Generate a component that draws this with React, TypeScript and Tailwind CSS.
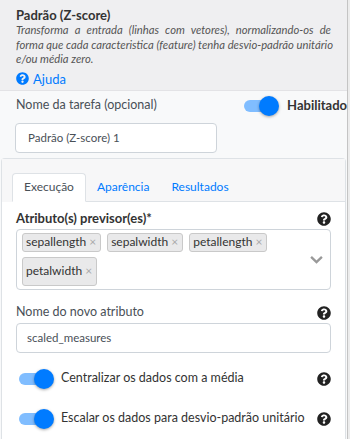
import { FaQuestionCircle } from "react-icons/fa";

const chips = ["sepallength", "sepalwidth", "petallength"];

const Toggle = () => (
  <span className="relative flex h-[20px] w-[36px] shrink-0 items-center">
    <span className="ml-[1px] h-[12px] w-[30px] rounded-full bg-[#80bdff]" />
    <span className="absolute right-0 top-0 h-[20px] w-[20px] rounded-full bg-[#007bff] shadow-[0_1px_3px_rgba(0,0,0,0.35)]" />
  </span>
);

const Help = () => <FaQuestionCircle className="h-[14px] w-[14px] shrink-0 text-[#222]" />;

const Chip = ({ label, tall }: { label: string; tall?: boolean }) => (
  <span
    className={`flex items-center gap-[3px] rounded-[3px] border border-[#c9c9c9] bg-[#e9e9ea] pl-[3px] pr-[4px] text-[12px] text-[#333] ${
      tall ? "h-[29px]" : "h-[19px]"
    }`}
  >
    {label}
    <span className="text-[12px] text-[#aaa]">×</span>
  </span>
);

export default function App() {
  return (
    <div
      className="flex h-[439px] w-[350px] overflow-hidden bg-[#ececec] text-[#333]"
      style={{ fontFamily: "Lato, 'Liberation Sans', sans-serif" }}
    >
      <div className="flex w-[348px] shrink-0 flex-col border-r border-[#c4c4c4] bg-[#f8f9fa]">
        <div className="border-b border-[#e3e3e6] bg-[#efeff1] px-[16px] pb-[3px] pt-[7px]">
          <div className="text-[13px] font-bold leading-[16px] text-[#333]">Padrão (Z-score)</div>
          <div className="text-[11.25px] italic leading-[14.5px] text-[#555]">
            <p className="whitespace-nowrap text-justify [text-align-last:justify]">
              Transforma a entrada (linhas com vetores), normalizando-os de
            </p>
            <p className="whitespace-nowrap text-justify [text-align-last:justify]">
              forma que cada caracteristica (feature) tenha desvio-padrão unitário
            </p>
            <p>e/ou média zero.</p>
          </div>
          <div className="mt-[4px] flex items-center gap-[4px] text-[13px] leading-[16px] text-[#007bff]">
            <FaQuestionCircle className="h-[13px] w-[13px]" />
            Ajuda
          </div>
        </div>

        <div className="mt-[5px] flex h-[20px] items-center pl-[16px]">
          <span className="flex-1 text-[12.5px] text-[#495057]">Nome da tarefa (opcional)</span>
          <div className="flex items-center gap-[8px] whitespace-nowrap">
            <Toggle />
            <span className="text-[13px] font-bold text-[#333]">Habilitado</span>
          </div>
        </div>
        <div className="ml-[15px] mt-[7px] flex h-[30px] w-[202px] items-center rounded-[4px] border border-[#ced4da] bg-white px-[12px] text-[11.5px] text-[#495057]">
          Padrão (Z-score) 1
        </div>

        <div className="ml-[1px] mr-[1px] mt-[5px] flex flex-1 flex-col rounded-t-[4px] border border-b-0 border-[#dee2e6] bg-white">
          <div className="bg-[#f7f7f8] pl-[10px] pt-[14px]">
            <div className="flex border-b border-[#dee2e6] text-[12px]">
              <span className="-mb-px flex h-[29px] items-center rounded-t-[4px] border border-[#dee2e6] border-b-white bg-white px-[11px] text-[#495057]">
                Execução
              </span>
              <span className="flex h-[28px] items-center px-[11px] text-[#007bff]">Aparência</span>
              <span className="flex h-[28px] items-center px-[11px] text-[#007bff]">Resultados</span>
            </div>
          </div>

          <div className="flex flex-col px-[14px] pt-[8px]">
            <div className="flex h-[18px] items-center justify-between">
              <span className="text-[13px] font-bold text-[#333]">Atributo(s) previsor(es)*</span>
              <Help />
            </div>
            <div className="mt-[1px] flex h-[61px] items-start rounded-[4px] border border-[#ced4da] bg-white pl-[5px] pr-[6px] pt-[3px]">
              <div className="flex flex-1 flex-wrap gap-x-[6px] gap-y-[5px]">
                {chips.map((c) => (
                  <Chip key={c} label={c} />
                ))}
                <Chip label="petalwidth" tall />
              </div>
              <svg viewBox="0 0 16 10" className="mt-[22px] h-[9px] w-[15px] text-[#999]">
                <path d="M2 2l6 6 6-6" fill="none" stroke="currentColor" strokeWidth="2.6" />
              </svg>
            </div>

            <div className="mt-[14px] flex h-[18px] items-center justify-between">
              <span className="text-[12.5px] text-[#495057]">Nome do novo atributo</span>
              <Help />
            </div>
            <div className="mt-[1px] flex h-[30px] items-center rounded-[4px] border border-[#ced4da] bg-white px-[10px] text-[11.5px] text-[#495057]">
              scaled_measures
            </div>

            <div className="mt-[14px] flex h-[24px] items-center pl-[2px]">
              <Toggle />
              <span className="ml-[7px] flex-1 text-[12.5px] text-[#333]">Centralizar os dados com a média</span>
              <Help />
            </div>
            <div className="mt-[16px] flex h-[24px] items-center pl-[2px]">
              <Toggle />
              <span className="ml-[7px] flex-1 text-[12.5px] text-[#333]">Escalar os dados para desvio-padrão unitário</span>
              <Help />
            </div>
          </div>
        </div>
      </div>
    </div>
  );
}
